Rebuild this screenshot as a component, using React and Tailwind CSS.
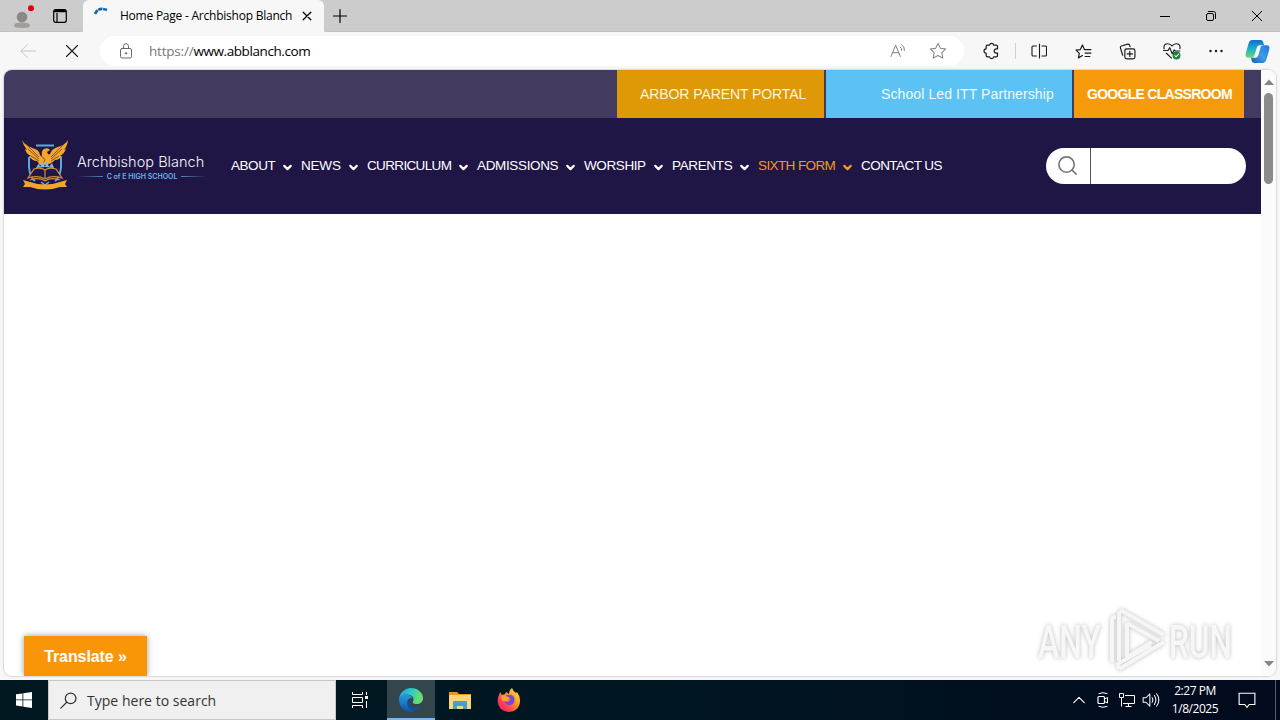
import { ChevronDown, Search } from 'lucide-react'

const menu = [
  { label: 'ABOUT', box: 'w-[70px]', text: 'tracking-[-0.45px]' },
  { label: 'NEWS', box: 'w-[66px]', text: 'tracking-[-0.2px]' },
  { label: 'CURRICULUM', box: 'w-[110px]', text: 'tracking-[-0.65px]' },
  { label: 'ADMISSIONS', box: 'w-[107px]', text: 'tracking-[-0.35px]' },
  { label: 'WORSHIP', box: 'w-[88px]', text: 'tracking-[-0.4px]' },
  { label: 'PARENTS', box: 'w-[86px]', text: 'tracking-[-0.35px]' },
  { label: 'SIXTH FORM', box: 'w-[103px]', text: 'tracking-[-0.6px]', active: true },
  { label: 'CONTACT US', box: 'w-[90px]', text: 'tracking-[-0.55px]', leaf: true },
]

function Icon({ className = 'size-4', children, ...rest }) {
  return (
    <svg viewBox="0 0 16 16" fill="none" stroke="currentColor" strokeLinecap="round" strokeLinejoin="round" className={`shrink-0 ${className}`} {...rest}>
      {children}
    </svg>
  )
}

function TabStrip() {
  return (
    <div className="flex h-8 bg-[#ccc]">
      <div className="flex w-[83px] items-center rounded-br-md border-b border-[#c0c0c0] pl-[10px]">
        <svg viewBox="0 0 24 24" className="size-6 shrink-0">
          <circle cx="12" cy="13" r="5.3" fill="#8b8785" />
          <path d="M4 21.500Q4 18.500 12 18.500T20 21.500Q20 24 12 24T4 21.500Z" fill="#a19d9b" />
          <circle cx="21" cy="4.300" r="3" fill="#e3000b" />
        </svg>
        <Icon className="ml-[18px] size-4">
          <rect x="1.700" y="1.700" width="12.600" height="12.600" rx="2" strokeWidth="1.200" />
          <path d="M2 3H14" strokeWidth="2.500" strokeLinecap="butt" />
          <path d="M5 5V14" strokeWidth="1.200" strokeLinecap="butt" />
        </Icon>
      </div>
      <div className="flex w-[241px] items-center rounded-t-md bg-[#f7f7f7] pl-[11px]">
        <Icon className="-mt-[2px] size-4">
          <path d="M1 7Q4.500 -.5 13 3" stroke="#1765a8" strokeWidth="2.600" strokeDasharray="4.500 .6" strokeLinecap="butt" />
        </Icon>
        <span className="ml-[10px] w-[177px] whitespace-nowrap text-[12px] tracking-[-0.230px] text-black">Home Page - Archbishop Blanch</span>
        <Icon className="ml-[2px] size-4"><path d="M4.200 4.200l7.600 7.600M11.800 4.200l-7.600 7.600" strokeWidth="1.300" /></Icon>
      </div>
      <div className="flex flex-1 items-center rounded-bl-md border-b border-[#c0c0c0] pl-[8px]">
        <Icon className="size-4"><path d="M8 1.500v13M1.500 8h13" strokeWidth="1.200" /></Icon>
        <div className="ml-auto flex gap-[30px] pr-[15px]">
          <Icon><path d="M3 8.500h10" strokeLinecap="butt" /></Icon>
          <Icon>
            <rect x="3.500" y="5.500" width="7" height="7" rx="1.500" />
            <path d="M5.500 3.500H10.500Q12.500 3.500 12.500 5.500V10.500" />
          </Icon>
          <Icon><path d="M3.200 3.200l9.600 9.600M12.800 3.200l-9.600 9.600" /></Icon>
        </div>
      </div>
    </div>
  )
}

function Toolbar() {
  return (
    <div className="flex h-[38px] items-center bg-[#f7f7f7] text-[#1b1b1b]">
      <Icon className="ml-[20px] size-4 text-[#c6c6c6]"><path d="M15.500 8H.8M7.500 1.500L.8 8l6.700 6.500" /></Icon>
      <Icon className="ml-[28px] size-4"><path d="M2.500 2.500l11 11M13.500 2.500l-11 11" strokeWidth="1.100" /></Icon>
      <div className="ml-[20px] flex h-[30px] w-[864px] items-center rounded-full bg-white">
        <Icon className="ml-[18px] size-4 text-[#6a6a6a]">
          <rect x="2.500" y="5.500" width="11" height="9.500" rx="1.500" />
          <path d="M5.500 5.500V3.200a2.500 2.500 0 015 0v2.300" />
          <circle cx="8" cy="10.300" r=".7" fill="currentColor" />
        </Icon>
        <span className="ml-[15px] w-[200px] whitespace-nowrap text-[13.500px] tracking-[-0.420px] text-black"><span className="tracking-[-0.200px] text-[#777]">https://</span>www.abblanch.com</span>
        <Icon className="ml-auto size-4 text-[#808080]">
          <path d="M1 13.500L5.700 2.200l4.600 11.300M2.700 9.700h6M10.300 4q1.700 1 1.500 3.500M11.500 1.500q3.200 2 3 6" />
        </Icon>
        <Icon className="ml-[23px] mr-[17px] size-[18px] text-[#808080]">
          <path d="M8 1.200l2.100 4.400 4.800.6-3.500 3.300.9 4.800L8 12l-4.300 2.300.9-4.800L1.100 6.200l4.800-.6z" strokeWidth=".9" />
        </Icon>
      </div>
      <Icon className="ml-[19px] size-[18px]">
        <path d="M4 2.700H5.800a1.900 1.900 0 013.700 0h2.200q1.200 0 1.200 1.200v2.200H11.800a1.900 1.900 0 100 3.800h1.100v2.200q0 1.200-1.200 1.200H9.500a1.900 1.900 0 01-3.700 0H4q-1.200 0-1.200-1.200V9.900a1.900 1.900 0 010-3.800V3.900q0-1.200 1.200-1.200z" strokeWidth="1.100" />
      </Icon>
      <div className="ml-[14px] h-4 w-px bg-[#d0d0d0]" />
      <Icon className="ml-[15px] size-4">
        <path d="M8.500 1v14M5.500 3H2q-1 0-1 1v8q0 1 1 1h3.500M11 3h3.500q1 0 1 1v8q0 1-1 1H11" strokeWidth="1.100" />
      </Icon>
      <Icon className="ml-[28px] size-[17px]">
        <path d="M10 6.200H8.900L7 1.800 5 6.200.9 6.700l3.200 3L3.200 14 7 11.800M10 6.200h5M9.500 9.500H15M9.500 12.700H14" strokeWidth="1.100" />
      </Icon>
      <Icon className="ml-[27px] size-[17px]">
        <rect x="5.500" y="5.500" width="9.500" height="9.500" rx="1.800" strokeWidth="1.100" />
        <path d="M10.200 7.800v5M7.700 10.300h5M3.500 11.500L1.300 4.500Q1 3.200 2.200 2.800l6-1.700q1.300-.3 1.700.8l.5 1.500" strokeWidth="1.100" />
      </Icon>
      <Icon className="ml-[27px] size-[18px]">
        <path d="M1 6C.3 3 2 1.500 4.200 1.500 6 1.500 7.300 2.600 8 3.600c.7-1 2-2.100 3.800-2.100C14 1.500 15.700 3 15 6M.5 7.500h4L6 5l2.200 5.500 1.900-3.500.8 1h4M3 10l4.500 4.300" strokeWidth="1" />
        <circle cx="12" cy="12" r="3.500" fill="#188038" stroke="none" />
        <path d="M10.400 12l1.200 1.200 2.200-2.400" stroke="#fff" strokeWidth=".9" />
      </Icon>
      <Icon className="ml-[27px] size-4" fill="currentColor" stroke="none">
        <circle cx="2.500" cy="8" r="1.200" /><circle cx="8" cy="8" r="1.200" /><circle cx="13.500" cy="8" r="1.200" />
      </Icon>
      <svg viewBox="0 0 24 24" className="ml-[21px] size-[25px] shrink-0">
        <defs>
          <linearGradient id="cpA" x1="0" y1="0" x2="0" y2="1"><stop stopColor="#136dcc" /><stop offset=".5" stopColor="#19b3c9" /><stop offset="1" stopColor="#75d66b" /></linearGradient>
          <linearGradient id="cpB" x1="1" y1="0" x2="0" y2="1"><stop stopColor="#1f75df" /><stop offset=".5" stopColor="#3d9de8" /><stop offset="1" stopColor="#1959bd" /></linearGradient>
        </defs>
        <path d="M7 1h8q2 0 2.500 2l.8 3H14q-2 0-2.600 2L9 16q-.6 2-2.600 2H3q-3 0-2.300-4L3.500 4Q4.500 1 7 1z" fill="url(#cpA)" />
        <path d="M17 23H9q-2 0-2.500-2l-.8-3H10q2 0 2.600-2L15 8q.6-2 2.600-2H21q3 0 2.300 4l-2.800 10q-1 3-3.500 3z" fill="url(#cpB)" />
      </svg>
    </div>
  )
}

function Crest() {
  return (
    <svg viewBox="0 0 46 50" className="-mt-[2px] h-[50px] w-[46px] shrink-0" fill="none">
      <path d="M7 17V27Q8 38 13 41M39 17V27Q38 38 33 41M14 5.500H32" stroke="#5da9df" strokeWidth="2" />
      <path d="M0 0Q3 6 13 9 17 10 18 15L20 17Q19 10 22 9 26 7 28 10L25 12Q27 17 29 12 30 9 36 7 43 5 46 0 45 7 42 10L44 9Q42 14 38 16L40 16Q37 20 33 20 28 26 18 25L15 21Q10 21 7 16L9 16Q4 14 3 9L5 10Q1 5 0 0Z" fill="#f3a52c" />
      <path d="M4 4L17 17M6 9L17 19M42 4L29 17M40 9L29 19M9 16L17 21M37 16L29 21M20 17Q25 19 21 23" stroke="#67432c" strokeWidth=".8" />
      <path d="M14 28l3-5 1 4 3-6 2 6 2-6 2 6 3-4 2 5-9-1z" fill="#74bdeb" />
      <path d="M12 29Q19 27 23 30 27 27 34 29L40 38Q30 35 23 39 16 35 6 38Z" fill="#211746" stroke="#d58c2b" strokeWidth="1.300" />
      <path d="M23 30V38M8 40Q17 37 23 41 29 37 38 40" stroke="#d58c2b" strokeWidth="1.200" />
      <path d="M19 42L23 45 27 42" stroke="#74bdeb" strokeWidth="1.200" />
      <path d="M1 40L8 42Q23 47 38 42L45 40 43 44 45 47 38 47Q23 52 8 47L1 47 3 44Z" fill="#f3a52c" />
    </svg>
  )
}

function SiteHeader() {
  return (
    <header className="font-['Liberation_Sans',sans-serif]">
      <div className="flex h-12 justify-end gap-[2px] bg-[#423a5f] pr-[17px] text-[14px] leading-[48px] whitespace-nowrap text-white">
        <a className="w-[207px] bg-[#df9806] pl-[23px] tracking-[-0.080px] text-[#fff4dc]">ARBOR PARENT PORTAL</a>
        <a className="w-[246px] bg-[#5bc2f3] pl-[55px] tracking-[0.100px] text-[#eefaff]">School Led ITT Partnership</a>
        <a className="w-[170px] bg-[#f59b0b] pl-[13px] font-bold tracking-[-0.720px]">GOOGLE CLASSROOM</a>
      </div>
      <div className="flex h-24 items-center bg-[#1f1646] pl-[18px]">
        <Crest />
        <div className="ml-[9px] w-[154px] font-['Inter',sans-serif] whitespace-nowrap">
          <div className="pt-[2px] text-[14.500px] leading-[18px] font-light tracking-[0.020px] text-[#f6f4fa]">Archbishop Blanch</div>
          <div className="mt-[1px] flex w-[130px] items-center gap-[4px] pb-[1px] text-[7px] leading-[9px] font-semibold text-[#69b5e6]">
            <span className="h-px flex-1 bg-gradient-to-r from-transparent to-[#69b5e6]/70" />
            <span>C of E HIGH SCHOOL</span>
            <span className="h-px flex-1 bg-gradient-to-l from-transparent to-[#69b5e6]/70" />
          </div>
        </div>
        <nav className="flex pt-[1px] text-[13.500px] whitespace-nowrap text-white">
          {menu.map(m => (
            <a key={m.label} className={`flex items-center justify-between ${m.box} ${m.active ? 'text-[#f39a1b]' : ''}`}>
              <span className={m.text}>{m.label}</span>
              {!m.leaf && <ChevronDown className="mt-[1px] mr-[7px] size-[13px]" strokeWidth={4} />}
            </a>
          ))}
        </nav>
        <div className="mr-[15px] ml-auto flex h-9 w-[200px] overflow-hidden rounded-full bg-white">
          <div className="flex w-[45px] items-center justify-center border-r border-[#555] pr-[1px] pb-[1px]">
            <Search className="size-[23px] text-[#777]" strokeWidth={1.7} />
          </div>
        </div>
      </div>
    </header>
  )
}

function Watermark() {
  return (
    <div className="absolute right-[41px] bottom-[3px] flex items-center gap-[4px] font-['Roboto',sans-serif] font-medium drop-shadow-[0_0_2px_#bbb]">
      <span className="w-[66px] origin-left scale-x-[0.68] text-[47px] leading-none text-[#f7f7f7]">ANY</span>
      <svg viewBox="0 0 60 64" className="h-16 w-[60px]" fill="none" stroke="#f6f6f6" strokeWidth="4" strokeLinejoin="round">
        <path d="M4 53V11Q4 8 8 8M11 52V5Q12 1 16 3L56 26M19 14V48L44 33M19 14L51 32M11 60L56 33M11 60L10 55L43 36" />
      </svg>
      <span className="-ml-[3px] w-[66px] origin-left scale-x-[0.67] text-[47px] leading-none text-[#f7f7f7]">RUN</span>
    </div>
  )
}

function Page() {
  return (
    <div className="h-[610px] bg-[#f7f7f7] pr-1 pb-1 pl-1">
      <main className="relative flex h-[606px] overflow-hidden rounded-lg bg-white shadow-[0_0_1px_1px_#d8d8d8]">
        <div className="w-[1257px]">
          <SiteHeader />
        </div>
        <div className="flex flex-1 flex-col items-center bg-[#fbfbfb] pt-[9px] pb-[9px]">
          <svg viewBox="0 0 10 6" className="h-[6px] w-[10px]" fill="#858585"><path d="M0 6l5-5.500L10 6z" /></svg>
          <div className="mt-[8px] h-[91px] w-[9px] rounded-full bg-[#8b8b8b]" />
          <svg viewBox="0 0 10 6" className="mt-auto h-[6px] w-[10px]" fill="#858585"><path d="M0 0l5 5.500L10 0z" /></svg>
        </div>
        <button className="absolute bottom-0 left-[20px] h-10 w-[123px] bg-[#f99608] pt-[1px] font-['Liberation_Sans',sans-serif] text-[16px] font-bold tracking-[-0.080px] text-white shadow-[0_0_6px_#999]">Translate »</button>
        <Watermark />
      </main>
    </div>
  )
}

function Taskbar() {
  return (
    <footer className="flex h-10 items-center bg-gradient-to-r from-[#011820] via-[#001722] to-[#020a1d] text-white">
      <div className="flex w-12 justify-center">
        <svg viewBox="0 0 16 16" className="size-4" fill="#fff"><path d="M0 2.300l6.500-.9v6.100H0zM7.300 1.300L16 0v7.500H7.300zM0 8.300h6.500v6.200L0 13.600zM7.300 8.300H16V16l-8.700-1.300z" /></svg>
      </div>
      <div className="flex h-10 w-72 items-center border border-[#c8c8c8] bg-[#f0f0f0] text-[#333]">
        <Icon className="ml-[11px] size-[17px]"><circle cx="10" cy="6" r="5" strokeWidth="1.200" /><path d="M6.300 9.700L.8 15.200" strokeWidth="1.200" /></Icon>
        <span className="ml-[10px] text-[14px] tracking-[0.020px]">Type here to search</span>
      </div>
      <div className="flex w-[51px] justify-center pr-[3px]">
        <Icon className="size-4" strokeLinecap="butt" strokeLinejoin="miter">
          <path d="M.5 0v2.500h10V0M.5 5.500h10v5H.5zM.5 16v-2.500h10V16M14.500 0v3M14.500 9v7" />
          <path d="M14.500 4v3" strokeWidth="3" />
        </Icon>
      </div>
      <div className="flex h-10 w-12 items-center justify-center border-b-2 border-[#76b9ed] bg-[#33464d] pt-[2px]">
        <svg viewBox="0 0 24 24" className="size-6">
          <defs>
            <linearGradient id="edA" x1="0" y1="0" x2="1" y2=".3"><stop stopColor="#269bd5" /><stop offset=".5" stopColor="#30c7c9" /><stop offset="1" stopColor="#6be06d" /></linearGradient>
            <linearGradient id="edB" x1="0" y1="0" x2="0" y2="1"><stop stopColor="#239cde" /><stop offset="1" stopColor="#0d55ad" /></linearGradient>
          </defs>
          <path d="M0 11C1 4 6 0 12 0c7 0 12 5 12 10 0 4-3 6-6.500 6-3 0-4.500-1-3.500-2.500 2-4-1.500-7-6-7-4 0-7 2-8 4.500z" fill="url(#edA)" />
          <path d="M0 12c0-4 4-6 8-5.500 3 .3 5 2 5.500 4C10 9.500 8 12 8.500 15c.5 4 4.500 6.500 8.500 5.500-2 3-4.500 3.500-6 3.300C4.500 23.500 0 18 0 12z" fill="url(#edB)" />
          <path d="M9.500 12C6 17 11 24 17 22.500c2.500-.8 4-2 5-4-5 2.500-12 1-12.500-6.500z" fill="#174f92" />
        </svg>
      </div>
      <div className="flex w-[49px] justify-center">
        <svg viewBox="0 0 22 19" className="h-[19px] w-[22px]">
          <path d="M0 1h8l2 2h12v5H0z" fill="#e79a22" />
          <path d="M0 4h22v14H0z" fill="#f8d775" />
          <path d="M4 18v-7q0-1 1-1h12q1 0 1 1v7h-4v-3H8v3z" fill="#4c9bd5" />
        </svg>
      </div>
      <div className="flex w-[49px] justify-center">
        <svg viewBox="0 0 24 24" className="size-6">
          <defs><linearGradient id="ffx" x1="1" y1="0" x2="0" y2="1"><stop stopColor="#fff44f" /><stop offset=".4" stopColor="#ff9627" /><stop offset=".7" stopColor="#ff4050" /><stop offset="1" stopColor="#e31587" /></linearGradient></defs>
          <path d="M2 7l1-3 2 3 3-1 1-2 3 2q0-4 3-6 1 3 4 5l1-1q3 4 3 8 0 11-11 12Q1 23 .7 13 .6 9 2 7z" fill="url(#ffx)" />
          <path d="M8 8q6-3 9 1 2 6-3 8-5 1-7-4l4 1 3-3q-4 1-6-3z" fill="#7747d6" />
          <path d="M4 8q3-2 5 0l4 2-3 3q-3 1-5-1z" fill="#ffa12e" />
        </svg>
      </div>
      <div className="ml-auto flex items-center">
        <Icon className="size-[14px]"><path d="M2 11l6-6 6 6" strokeWidth="1.300" /></Icon>
        <Icon className="ml-[9px] size-4">
          <rect x="3" y="4.500" width="6.500" height="7" rx="1" strokeWidth="1.200" />
          <path d="M9.500 7l3-1.500V11l-3-1.500M4 1.500Q8-.2 12 1.500M4 14.500q4 1.700 8 0" />
        </Icon>
        <Icon className="ml-[8px] size-4" strokeLinecap="butt">
          <path d="M6 3.500h9.500v8H4M.5 1.500h4v4h-4zM2.500 5.500v9M9.500 11.500v3M6.500 14.500h6" />
        </Icon>
        <Icon className="ml-[7px] size-[18px]">
          <path d="M1 6h2.500L7 2.500v11L3.500 10H1zM9 6q1.300 2 0 4M11 4q2.700 4 0 8M13 2.500q4 5.500 0 11" strokeWidth=".9" />
        </Icon>
        <div className="ml-[6px] w-[58px] text-center text-[12px] leading-[18px] tracking-[-0.450px] whitespace-nowrap">
          <div>2:27 PM</div>
          <div>1/8/2025</div>
        </div>
        <Icon className="mr-[19px] ml-[14px] size-[18px]" strokeLinejoin="miter"><path d="M1 2h14v10h-5l-2 2.500L6 12H1z" /></Icon>
        <div className="mr-[4px] h-10 w-px bg-[#52606c]" />
      </div>
    </footer>
  )
}

export default function App() {
  return (
    <div className="h-[720px] w-[1280px] overflow-hidden bg-[#f7f7f7] font-['Open_Sans','Noto_Sans',sans-serif]">
      <TabStrip />
      <Toolbar />
      <Page />
      <Taskbar />
    </div>
  )
}
